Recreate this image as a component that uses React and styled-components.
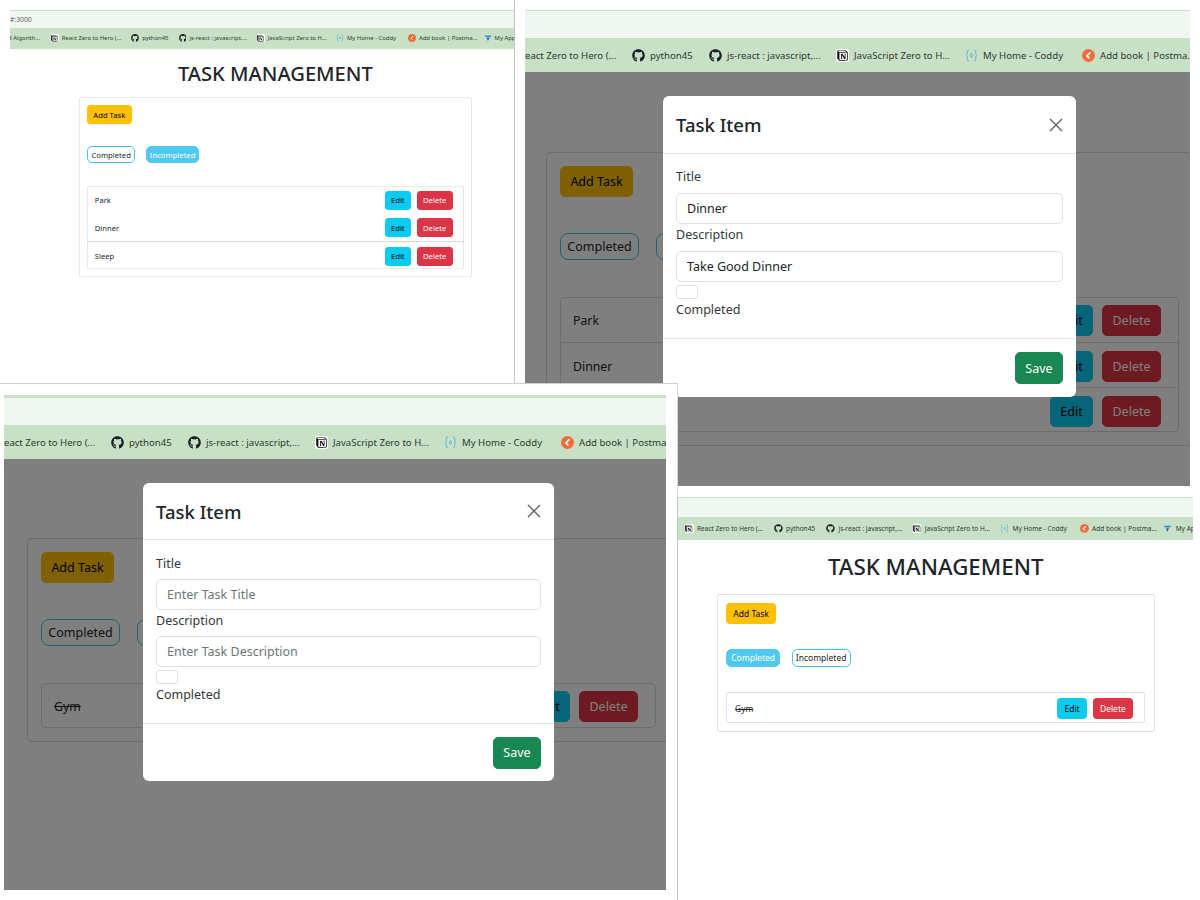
import React from 'react';
import styled, { createGlobalStyle } from 'styled-components';
import { FaGithub } from 'react-icons/fa';
import { SiNotion } from 'react-icons/si';

const GlobalStyle = createGlobalStyle`
    html, body {
        margin: 0;
        background: #ffffff;
    }
    * {
        box-sizing: border-box;
    }
`;

const Desktop = styled.div`
    position: relative;
    width: 1200px;
    height: 900px;
    overflow: hidden;
    background: #ffffff;
    font-family: "Noto Sans", "Open Sans", sans-serif;
    color: #212529;
`;

/* each screenshot pasted in the collage is one window on the canvas */
const Window = styled.section`
    position: absolute;
    left: ${(p) => p.$left}px;
    top: ${(p) => p.$top}px;
    width: ${(p) => p.$width}px;
    height: ${(p) => p.$height}px;
    z-index: ${(p) => p.$layer};
    padding: ${(p) => p.$pad};
    display: flex;
    background: #ffffff;
    border-left: ${(p) => (p.$edgeLeft ? '1.5px solid #c4c4c4' : 'none')};
    border-top: ${(p) => (p.$edgeTop ? '1px solid #cfcfcf' : 'none')};
    border-right: ${(p) => (p.$edgeRight ? '1.5px solid #dcdcdc' : 'none')};
`;

const Screen = styled.div`
    flex: 1;
    min-width: 0;
    overflow: hidden;
    display: flex;
    flex-direction: column;
    zoom: ${(p) => p.$zoom};
`;

const TabStrip = styled.div`
    flex: none;
    height: ${(p) => p.$height}px;
    display: flex;
    align-items: center;
    background: #f0f7f0;
    border-top: ${(p) => p.$edge}px solid #c8e1c6;
    font-size: 11px;
    color: #666666;
`;

const BookmarkBar = styled.div`
    flex: none;
    height: 34px;
    display: flex;
    align-items: center;
    overflow: hidden;
    background: #c8e1c6;
    white-space: nowrap;
`;

const Bookmark = styled.div`
    flex: none;
    width: ${(p) => p.$width}px;
    display: flex;
    align-items: center;
    gap: 5px;
    font-size: 9.6px;
    color: #2d3a30;
    margin-left: ${(p) => p.$shift || 0}px;

    svg {
        flex: none;
    }
`;

const NotionBadge = styled.span`
    flex: none;
    width: 13px;
    height: 13px;
    display: flex;
    align-items: center;
    justify-content: center;
    background: #ffffff;
    border-radius: 2px;
`;

const Viewport = styled.main`
    position: relative;
    flex: 1;
    min-height: 0;
    overflow: hidden;
    background: #ffffff;
`;

const Column = styled.div`
    width: ${(p) => p.$width}px;
    margin-left: ${(p) => p.$left}px;
`;

const Heading = styled.h1`
    height: ${(p) => p.$height}px;
    margin: 0;
    display: flex;
    align-items: center;
    justify-content: center;
    font-size: 32.8px;
    font-weight: 500;
    white-space: nowrap;
`;

const Card = styled.div`
    padding: ${(p) => p.$pad}px;
    box-shadow: inset 0 0 0 1px #d8d9da;
    border-radius: 5px;
`;

const Button = styled.button`
    height: 31px;
    padding: 0;
    width: ${(p) => p.$width}px;
    border: 1px solid ${(p) => p.$bg};
    border-radius: 5px;
    background: ${(p) => p.$bg};
    color: ${(p) => p.$fg};
    font-family: inherit;
    font-size: 12.5px;
`;

const FilterRow = styled.div`
    display: flex;
    gap: 17px;
    margin: 36px 0 37px;
`;

const Pill = styled.button`
    height: 27px;
    padding: 0;
    width: ${(p) => p.$width}px;
    border: 1px solid ${(p) => (p.$active ? '#4fc8f2' : '#3fc4e6')};
    border-radius: 8px;
    background: ${(p) => (p.$active ? '#4fc8f2' : 'transparent')};
    color: ${(p) => (p.$active ? '#ffffff' : '#212529')};
    font-family: inherit;
    font-size: 12.5px;
`;

const TaskList = styled.ul`
    margin: 0;
    padding: 0;
    list-style: none;
    box-shadow: inset 0 0 0 1px #d8d9da;
    border-radius: 5px;
`;

const TaskRow = styled.li`
    height: 45px;
    display: flex;
    align-items: center;
    padding: 2px 18px 0 13px;
    gap: 9px;
    font-size: 12.3px;
    border-top: ${(p) => (p.$divider ? '1px solid #d8d9da' : 'none')};
`;

const TaskTitle = styled.span`
    flex: 1;
    text-decoration: ${(p) => (p.$done ? 'line-through' : 'none')};
`;

const Backdrop = styled.div`
    position: absolute;
    inset: 0;
    background: rgba(0, 0, 0, 0.5);
`;

const Modal = styled.div`
    position: absolute;
    top: 24px;
    left: ${(p) => p.$left}px;
    width: ${(p) => p.$width}px;
    background: #ffffff;
    border-radius: 6px;
`;

const ModalHeader = styled.header`
    height: ${(p) => (p.$tight ? 57 : 58)}px;
    display: flex;
    align-items: center;
    justify-content: space-between;
    padding: 0 13px;
    border-bottom: 1px solid #e3e4e5;

    h2 {
        margin: 0;
        font-size: 18.5px;
        font-weight: 500;
    }
`;

const CloseIcon = styled.svg`
    width: 14px;
    height: 14px;
`;

const ModalBody = styled.div`
    padding: ${(p) => (p.$tight ? 13 : 12)}px 13px 19px;
    font-size: 12.5px;
`;

const FieldLabel = styled.label`
    display: block;
    height: 20px;
    line-height: 21px;
    margin-bottom: ${(p) => p.$gap}px;
    color: #33383c;
`;

const TextInput = styled.input`
    display: block;
    width: 100%;
    height: 31px;
    padding: 0 10px;
    border: 1px solid #dee2e6;
    border-radius: 5px;
    background: #ffffff;
    color: #212529;
    font-family: inherit;
    font-size: 12.5px;

    &::placeholder {
        color: #6c757d;
        opacity: 1;
    }
`;

const CheckBox = styled.input`
    appearance: none;
    display: block;
    width: 22px;
    height: 14px;
    margin: 3px 0 0;
    border: 1px solid #dee2e6;
    border-radius: 3px;
    background: #ffffff;
`;

const ModalFooter = styled.footer`
    height: ${(p) => (p.$tight ? 58 : 59)}px;
    display: flex;
    align-items: center;
    justify-content: flex-end;
    padding: 0 13px;
    border-top: 1px solid #e3e4e5;
`;

const SaveButton = styled(Button)`
    height: 32px;
`;

const CoddyIcon = () => (
    <svg width="13" height="13" viewBox="0 0 16 16" fill="none" stroke="#58b4d2" strokeWidth="1.2">
        <path d="M5 1.5H4C3 1.5 2.8 2.2 2.8 3v3C2.8 7 2.2 7.6 1.5 8c.7.4 1.3 1 1.3 2v3c0 .8.2 1.5 1.2 1.5h1" />
        <path d="M11 1.5h1c1 0 1.2.7 1.2 1.5v3c0 1 .6 1.6 1.3 2-.7.4-1.3 1-1.3 2v3c0 .8-.2 1.5-1.2 1.5h-1" />
        <path d="M8 5.5 9.5 8 8 10.5 6.5 8z" />
    </svg>
);

const PostmanIcon = () => (
    <svg width="13" height="13" viewBox="0 0 16 16">
        <circle cx="8" cy="8" r="8" fill="#f26b3a" />
        <path d="M10.5 4 6 8.5l3 3" fill="none" stroke="#ffffff" strokeWidth="2" />
    </svg>
);

const FunnelIcon = () => (
    <svg width="13" height="13" viewBox="0 0 16 16">
        <path d="M1 3h14l-2.5 3.5h-9z" fill="#2b86e6" />
        <path d="M5 7.5h6L8 14z" fill="#1c62c4" />
    </svg>
);

const bookmarkIcons = {
    github: <FaGithub size={13} color="#1b1f23" />,
    notion: <NotionBadge><SiNotion size={11} color="#111111" /></NotionBadge>,
    coddy: <CoddyIcon />,
    postman: <PostmanIcon />,
    funnel: <FunnelIcon />,
};

const bookmarks = [
    { label: 'Data Structures and Algorith...', width: 153 },
    { icon: 'notion', label: 'React Zero to Hero (...', width: 131 },
    { icon: 'github', label: 'python45', width: 77 },
    { icon: 'github', label: 'js-react : javascript,...', width: 127 },
    { icon: 'notion', label: 'JavaScript Zero to H...', width: 129 },
    { icon: 'coddy', label: 'My Home - Coddy', width: 117 },
    { icon: 'postman', label: 'Add book | Postma...', width: 123 },
    { icon: 'funnel', label: 'My Apps', width: 80 },
];

const activeTasks = [
    { title: 'Park' },
    { title: 'Dinner' },
    { title: 'Sleep' },
];

const doneTasks = [{ title: 'Gym', done: true }];

function Bookmarks({ shift }) {
    return (
        <BookmarkBar>
            {bookmarks.map((item, i) => (
                <Bookmark key={item.label} $width={item.width} $shift={i === 0 ? shift : 0}>
                    {item.icon && bookmarkIcons[item.icon]}
                    {item.label}
                </Bookmark>
            ))}
        </BookmarkBar>
    );
}

function Board({ left, width, headingHeight = 80, cardPad = 14, tasks, activeFilter, hideInnerRule }) {
    return (
        <Column $left={left} $width={width}>
            <Heading $height={headingHeight}>TASK MANAGEMENT</Heading>
            <Card $pad={cardPad}>
                <Button $width={73} $bg="#ffc107" $fg="#000000">Add Task</Button>
                <FilterRow>
                    <Pill $width={79} $active={activeFilter === 'completed'}>Completed</Pill>
                    <Pill $width={87} $active={activeFilter === 'incompleted'}>Incompleted</Pill>
                </FilterRow>
                <TaskList>
                    {tasks.map((task, i) => (
                        <TaskRow key={task.title} $divider={i > 0 && !(hideInnerRule && i === 1)}>
                            <TaskTitle $done={task.done}>{task.title}</TaskTitle>
                            <Button $width={43} $bg="#0dcaf0" $fg="#000000">Edit</Button>
                            <Button $width={59} $bg="#dc3545" $fg="#ffffff">Delete</Button>
                        </TaskRow>
                    ))}
                </TaskList>
            </Card>
        </Column>
    );
}

function TaskModal({ left, width, title, description, tight }) {
    return (
        <Modal $left={left} $width={width}>
            <ModalHeader $tight={tight}>
                <h2>Task Item</h2>
                <CloseIcon viewBox="0 0 14 14">
                    <path d="M1 1l12 12M13 1 1 13" stroke="#5f6468" strokeWidth="1.4" fill="none" />
                </CloseIcon>
            </ModalHeader>
            <ModalBody $tight={tight}>
                <FieldLabel $gap={tight ? 6 : 7}>Title</FieldLabel>
                <TextInput readOnly value={title} placeholder="Enter Task Title" />
                <FieldLabel $gap={tight ? 6 : 7}>Description</FieldLabel>
                <TextInput readOnly value={description} placeholder="Enter Task Description" />
                <CheckBox type="checkbox" readOnly />
                <FieldLabel $gap={0}>Completed</FieldLabel>
            </ModalBody>
            <ModalFooter $tight={tight}>
                <SaveButton $width={48} $bg="#198754" $fg="#ffffff">Save</SaveButton>
            </ModalFooter>
        </Modal>
    );
}

export default function App() {
    return (
        <Desktop>
            <GlobalStyle />

            <Window $left={0} $top={0} $width={514} $height={400} $layer={1} $pad="10px 0 0 10px">
                <Screen $zoom={0.615}>
                    <TabStrip $height={29} $edge={1}>#:3000</TabStrip>
                    <Bookmarks shift={-87} />
                    <Viewport>
                        <Board left={112} width={639} headingHeight={79} cardPad={13} tasks={activeTasks} activeFilter="incompleted" hideInnerRule />
                    </Viewport>
                </Screen>
            </Window>

            <Window $left={514} $top={0} $width={686} $height={500} $layer={2} $edgeLeft $pad="10px 10px 14px 10px">
                <Screen $zoom={1}>
                    <TabStrip $height={28} $edge={1} />
                    <Bookmarks shift={-177} />
                    <Viewport>
                        <Board left={21} width={647} tasks={activeTasks} />
                        <Backdrop />
                        <TaskModal left={138} width={413} title="Dinner" description="Take Good Dinner" />
                    </Viewport>
                </Screen>
            </Window>

            <Window $left={0} $top={383} $width={678} $height={517} $layer={3} $edgeTop $edgeRight $pad="11px 11px 10px 4px">
                <Screen $zoom={1}>
                    <TabStrip $height={30} $edge={3} />
                    <Bookmarks shift={-177} />
                    <Viewport>
                        <Board left={23} width={643} headingHeight={79} tasks={doneTasks} />
                        <Backdrop />
                        <TaskModal left={139} width={411} title="" description="" tight />
                    </Viewport>
                </Screen>
            </Window>

            <Window $left={677} $top={497} $width={523} $height={403} $layer={4} $edgeLeft $pad="0 7px 0 0">
                <Screen $zoom={0.68}>
                    <TabStrip $height={29} $edge={1} />
                    <Bookmarks shift={-143} />
                    <Viewport>
                        <Board left={57} width={644} headingHeight={79} tasks={doneTasks} activeFilter="completed" />
                    </Viewport>
                </Screen>
            </Window>
        </Desktop>
    );
}
